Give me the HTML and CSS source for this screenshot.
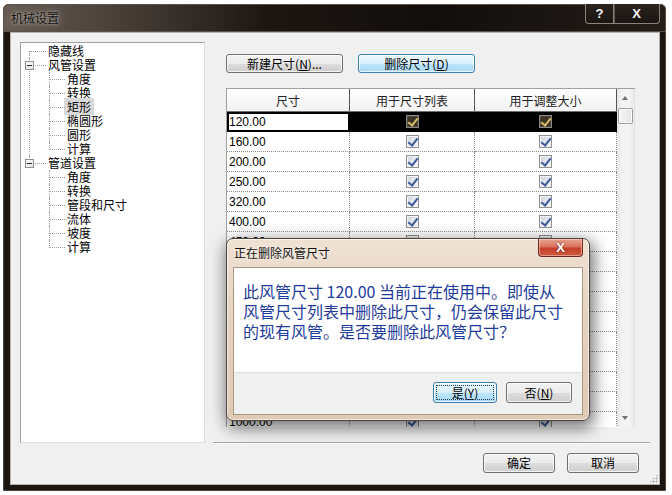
FILE: index.html
```html
<!DOCTYPE html>
<html lang="zh-CN">
<head>
  <meta charset="UTF-8" />
  <title>机械设置</title>
  <link rel="stylesheet" href="styles.css">
</head>
<body>
  <div class="window">
    <div class="titlebar">
      <span class="title">机械设置</span>
      <div class="caption-buttons">
        <span class="cap-btn help">?</span>
        <span class="cap-btn close">X</span>
      </div>
    </div>

    <div class="client">
      <div class="main">
        <ul class="tree">
          <li class="first"><div class="item"><span class="label">隐藏线</span></div></li>
          <li>
            <div class="item"><span class="toggle"></span><span class="label">风管设置</span></div>
            <ul>
              <li><div class="item"><span class="label">角度</span></div></li>
              <li><div class="item"><span class="label">转换</span></div></li>
              <li><div class="item"><span class="label selected">矩形</span></div></li>
              <li><div class="item"><span class="label">椭圆形</span></div></li>
              <li><div class="item"><span class="label">圆形</span></div></li>
              <li class="last"><div class="item"><span class="label">计算</span></div></li>
            </ul>
          </li>
          <li class="last">
            <div class="item"><span class="toggle"></span><span class="label">管道设置</span></div>
            <ul>
              <li><div class="item"><span class="label">角度</span></div></li>
              <li><div class="item"><span class="label">转换</span></div></li>
              <li><div class="item"><span class="label">管段和尺寸</span></div></li>
              <li><div class="item"><span class="label">流体</span></div></li>
              <li><div class="item"><span class="label">坡度</span></div></li>
              <li class="last"><div class="item"><span class="label">计算</span></div></li>
            </ul>
          </li>
        </ul>

        <div class="right">
          <div class="toolbar">
            <button class="btn tool">新建尺寸(<u>N</u>)...</button>
            <button class="btn tool hot">删除尺寸(<u>D</u>)</button>
          </div>

          <div class="grid">
            <div class="grid-main">
              <div class="grid-head">
                <div class="hcell">尺寸</div>
                <div class="hcell">用于尺寸列表</div>
                <div class="hcell">用于调整大小</div>
              </div>
              <div class="grid-body">
                <div class="row selected"><div class="cell size editing">120.00</div><div class="cell"><span class="chk"></span></div><div class="cell"><span class="chk"></span></div></div>
                <div class="row"><div class="cell size">160.00</div><div class="cell"><span class="chk"></span></div><div class="cell"><span class="chk"></span></div></div>
                <div class="row"><div class="cell size">200.00</div><div class="cell"><span class="chk"></span></div><div class="cell"><span class="chk"></span></div></div>
                <div class="row"><div class="cell size">250.00</div><div class="cell"><span class="chk"></span></div><div class="cell"><span class="chk"></span></div></div>
                <div class="row"><div class="cell size">320.00</div><div class="cell"><span class="chk"></span></div><div class="cell"><span class="chk"></span></div></div>
                <div class="row"><div class="cell size">400.00</div><div class="cell"><span class="chk"></span></div><div class="cell"><span class="chk"></span></div></div>
                <div class="row"><div class="cell size">450.00</div><div class="cell"><span class="chk"></span></div><div class="cell"><span class="chk"></span></div></div>
                <div class="row"><div class="cell size">500.00</div><div class="cell"><span class="chk"></span></div><div class="cell"><span class="chk"></span></div></div>
                <div class="row"><div class="cell size">550.00</div><div class="cell"><span class="chk"></span></div><div class="cell"><span class="chk"></span></div></div>
                <div class="row"><div class="cell size">600.00</div><div class="cell"><span class="chk"></span></div><div class="cell"><span class="chk"></span></div></div>
                <div class="row"><div class="cell size">630.00</div><div class="cell"><span class="chk"></span></div><div class="cell"><span class="chk"></span></div></div>
                <div class="row"><div class="cell size">700.00</div><div class="cell"><span class="chk"></span></div><div class="cell"><span class="chk"></span></div></div>
                <div class="row"><div class="cell size">750.00</div><div class="cell"><span class="chk"></span></div><div class="cell"><span class="chk"></span></div></div>
                <div class="row"><div class="cell size">800.00</div><div class="cell"><span class="chk"></span></div><div class="cell"><span class="chk"></span></div></div>
                <div class="row"><div class="cell size">900.00</div><div class="cell"><span class="chk"></span></div><div class="cell"><span class="chk"></span></div></div>
                <div class="row"><div class="cell size">1000.00</div><div class="cell"><span class="chk"></span></div><div class="cell"><span class="chk"></span></div></div>
              </div>
            </div>
            <div class="vscroll">
              <div class="arrow up"></div>
              <div class="thumb"></div>
              <div class="track"></div>
              <div class="arrow down"></div>
            </div>
          </div>

          <div class="separator"></div>
        </div>
      </div>

      <div class="footer">
        <button class="btn wide">确定</button>
        <button class="btn wide">取消</button>
      </div>
      <span class="grip"></span>
    </div>
  </div>

  <div class="msgbox">
    <div class="msg-title">正在删除风管尺寸</div>
    <span class="msg-close">X</span>
    <div class="msg-client">
      <div class="msg-body">
        <div class="msg-line">此风管尺寸 120.00 当前正在使用中。即使从</div>
        <div class="msg-line">风管尺寸列表中删除此尺寸，仍会保留此尺寸</div>
        <div class="msg-line">的现有风管。是否要删除此风管尺寸？</div>
      </div>
      <div class="msg-buttons">
        <button class="btn yes focused">是(<u>Y</u>)</button>
        <button class="btn no">否(<u>N</u>)</button>
      </div>
    </div>
  </div>
</body>
</html>
```

FILE: styles.css
```css
* {
  box-sizing: border-box;
}

body {
  margin: 0;
  width: 672px;
  height: 495px;
  overflow: hidden;
  position: relative;
  background: #ffffff;
  font-family: "Noto Sans CJK SC", "Liberation Sans", sans-serif;
  font-size: 12px;
  color: #000;
}

/* main window */

.window {
  margin: 4px 0 0 3px;
  width: 663px;
  height: 487px;
  display: flex;
  flex-direction: column;
  background: #1b1612;
  border-radius: 6px 6px 2px 2px;
  box-shadow: inset 0 0 0 1px #4a423b;
}

.titlebar {
  height: 28px;
  display: flex;
  align-items: flex-start;
  border-radius: 6px 6px 0 0;
  background: linear-gradient(90deg, #675c55 0%, #4b413a 16%, #1c1612 40%, #120e0b 65%, #231d19 100%);
  box-shadow: inset 0 0 0 1px #5a514a;
}

.title {
  margin: 7px 0 0 8px;
  line-height: 14px;
  color: #111;
  text-shadow: 0 0 3px rgba(215, 206, 198, 0.9), 0 0 8px rgba(170, 160, 150, 0.8);
}

.caption-buttons {
  margin-left: auto;
  margin-right: 6px;
  display: flex;
}

.cap-btn {
  height: 20px;
  display: flex;
  justify-content: center;
  align-items: center;
  border: 1px solid #8a827b;
  border-top: none;
  background: linear-gradient(#2a231f, #1a1512);
  color: #f4f4f4;
  font-family: "Liberation Sans", sans-serif;
  font-weight: bold;
  font-size: 13px;
}

.cap-btn.help {
  width: 29px;
  border-radius: 0 0 0 4px;
}

.cap-btn.close {
  width: 46px;
  border-left: none;
  border-radius: 0 0 4px 0;
  box-shadow: inset 1px 0 0 #5d5650;
}

.client {
  flex: 1;
  margin: 0 6px 6px 7px;
  padding: 9px 9px 0 9px;
  position: relative;
  background: #f0f0f0;
  border: 1px solid #b8b0a9;
}

.main {
  display: flex;
  gap: 8px;
  height: 401px;
}

/* tree */

.tree {
  width: 185px;
  height: 401px;
  margin: 0;
  padding: 1px 0 0 0;
  list-style: none;
  background: #ffffff;
  border: 1px solid;
  border-color: #a0a0a0 #dcdcdc #dcdcdc #a0a0a0;
}

.tree ul {
  margin: 0;
  padding: 0;
  list-style: none;
}

.tree li {
  position: relative;
}

.tree li::before {
  content: '';
  position: absolute;
  left: 8px;
  top: 0;
  bottom: 0;
  border-left: 1px dotted #a0a0a0;
}

.tree li.first::before {
  top: 7px;
}

.tree li.last::before {
  bottom: auto;
  height: 8px;
}

.item {
  position: relative;
  height: 14px;
  line-height: 14px;
  padding-left: 27px;
  white-space: nowrap;
}

.item::before {
  content: '';
  position: absolute;
  left: 9px;
  top: 7px;
  width: 16px;
  border-top: 1px dotted #a0a0a0;
}

.tree ul li::before {
  left: 28px;
}

.tree ul .item {
  padding-left: 46px;
}

.tree ul .item::before {
  left: 29px;
  width: 15px;
}

.toggle {
  position: absolute;
  left: 4px;
  top: 3px;
  width: 9px;
  height: 9px;
  z-index: 1;
  border: 1px solid #929292;
  background: linear-gradient(135deg, #ffffff, #e2e2e2);
}

.toggle::after {
  content: '';
  position: absolute;
  left: 1px;
  top: 3px;
  width: 5px;
  height: 1px;
  background: #2b2b2b;
}

.label.selected {
  background: #d9d9d9;
  padding: 0 3px;
  margin-left: -3px;
}

/* right side */

.right {
  flex: 1;
  display: flex;
  flex-direction: column;
  padding: 12px 0 0 13px;
}

.toolbar {
  display: flex;
  gap: 15px;
}

.btn {
  position: relative;
  height: 19px;
  padding: 0;
  font-family: "Noto Sans CJK SC", "Liberation Sans", sans-serif;
  font-size: 12px;
  line-height: 16px;
  color: #000;
  border: 1px solid #707070;
  border-radius: 3px;
  background: linear-gradient(#f2f2f2 0%, #ebebeb 50%, #dddddd 51%, #cfcfcf 100%);
  box-shadow: inset 0 0 0 1px rgba(255, 255, 255, 0.75);
}

.btn u {
  text-decoration: underline;
}

.btn.tool {
  width: 117px;
}

.btn.hot,
.btn.focused {
  border-color: #3c7fb1;
  background: linear-gradient(#eaf6fd 0%, #d9f0fc 50%, #bee6fd 51%, #a7d9f5 100%);
}

.btn.focused::after {
  content: '';
  position: absolute;
  inset: 2px;
  border: 1px dotted #1c3c5c;
  border-radius: 1px;
}

/* grid */

.grid {
  margin-top: 15px;
  width: 409px;
  height: 339px;
  display: flex;
  border-top: 1px solid #a0a0a0;
  border-left: 1px solid #a0a0a0;
}

.grid-main {
  width: 390px;
}

.grid-head {
  height: 23px;
  display: grid;
  grid-template-columns: 123px 125px 142px;
  background: linear-gradient(#ffffff, #f3f3f3);
  border-bottom: 1px solid #6e6e6e;
}

.hcell {
  display: flex;
  justify-content: center;
  align-items: center;
  color: #222;
  border-right: 1px solid #555;
}

.grid-body {
  height: 315px;
  overflow: hidden;
  background: #ffffff;
}

.row {
  height: 20px;
  display: grid;
  grid-template-columns: 123px 125px 142px;
}

.cell {
  display: flex;
  justify-content: center;
  align-items: center;
  border-right: 1px dotted #8a8a8a;
  border-bottom: 1px dotted #8a8a8a;
}

.cell.size {
  justify-content: flex-start;
  padding-left: 2px;
  font-family: "Liberation Sans", sans-serif;
  font-size: 12px;
}

.row.selected {
  background: #000;
}

.row.selected .cell {
  border-color: #000;
}

.cell.editing {
  background: #ffffff;
  border: 2px solid #000;
  padding-left: 0;
}

.chk {
  position: relative;
  width: 13px;
  height: 13px;
  border: 1px solid #8e8f8f;
  background: linear-gradient(135deg, #cfd4dc, #f7f7f7);
  box-shadow: inset 0 0 0 1px #f4f4f4;
}

.chk::after {
  content: '';
  position: absolute;
  left: 3px;
  top: 0;
  width: 4px;
  height: 8px;
  border: solid #3e5a98;
  border-width: 0 2px 2px 0;
  transform: rotate(38deg);
}

.row.selected .chk {
  border-color: #8a8a8a;
  background: #3b3326;
  box-shadow: inset 0 0 0 1px #4e4535;
}

.row.selected .chk::after {
  border-color: #d9bd6c;
}

.vscroll {
  width: 18px;
  display: flex;
  flex-direction: column;
  background: linear-gradient(90deg, #e6e6e6, #f4f4f4 30%, #f4f4f4 70%, #e9e9e9);
  border-right: 1px solid #e2e2e2;
}

.arrow {
  height: 18px;
  position: relative;
}

.arrow::after {
  content: '';
  position: absolute;
  left: 5px;
  top: 7px;
  border-left: 3px solid transparent;
  border-right: 3px solid transparent;
}

.arrow.up::after {
  border-bottom: 4px solid #707070;
}

.arrow.down::after {
  border-top: 4px solid #707070;
}

.thumb {
  height: 16px;
  margin: 1px 1px 0 1px;
  border: 1px solid #9c9c9c;
  border-radius: 2px;
  background: linear-gradient(90deg, #f6f6f6, #e4e4e4);
  box-shadow: inset 0 0 0 1px #ffffff;
}

.track {
  flex: 1;
}

.separator {
  margin: 15px 0 0 -13px;
  height: 2px;
  border-top: 1px solid #a6a6a6;
  border-bottom: 1px solid #ffffff;
}

/* footer */

.footer {
  display: flex;
  justify-content: flex-end;
  gap: 12px;
  padding: 10px 11px 0 0;
}

.btn.wide {
  width: 72px;
  height: 20px;
}

.grip {
  position: absolute;
  right: 1px;
  bottom: 1px;
  width: 9px;
  height: 9px;
  background: radial-gradient(circle, #a8a8a8 0.8px, transparent 1.2px) 0 0 / 3px 3px;
  clip-path: polygon(100% 0, 100% 100%, 0 100%);
}

/* message box */

.msgbox {
  position: absolute;
  left: 226px;
  top: 238px;
  width: 364px;
  height: 183px;
  display: flex;
  flex-direction: column;
  padding: 0 6px 5px 6px;
  border: 1px solid #4f4439;
  border-radius: 7px;
  background: linear-gradient(180deg, #efe1d3 0%, #e6d3c0 40%, #dfcab5 100%);
  box-shadow: 2px 5px 16px 2px rgba(0, 0, 0, 0.55), inset 0 0 0 1px rgba(255, 255, 255, 0.6);
}

.msg-title {
  height: 28px;
  display: flex;
  align-items: center;
  padding: 0 0 1px 1px;
  color: #111;
  text-shadow: 0 0 6px #ffffff;
}

.msg-close {
  position: absolute;
  top: 0;
  right: 6px;
  width: 45px;
  height: 18px;
  display: flex;
  justify-content: center;
  align-items: center;
  border: 1px solid #6e2a20;
  border-top: none;
  border-radius: 0 0 4px 4px;
  background: linear-gradient(#e9a393 0%, #d9705c 45%, #c4402c 55%, #cf5a3f 100%);
  box-shadow: inset 0 0 0 1px rgba(255, 220, 210, 0.5);
  color: #ffffff;
  font-family: "Liberation Sans", sans-serif;
  font-weight: bold;
  font-size: 13px;
  text-shadow: 0 0 2px #6b1e14;
}

.msg-client {
  flex: 1;
  display: flex;
  flex-direction: column;
  border: 1px solid #a69684;
  background: #f0f0f0;
}

.msg-body {
  height: 105px;
  padding: 13px 0 0 9px;
  background: #ffffff;
  border-bottom: 1px solid #dfdfdf;
  color: #1f3c9a;
  font-size: 16px;
  white-space: nowrap;
}

.msg-line {
  height: 20px;
  line-height: 20px;
}

.msg-buttons {
  display: flex;
  justify-content: flex-end;
  gap: 9px;
  padding: 9px 10px 0 0;
}

.btn.yes {
  width: 64px;
  height: 21px;
}

.btn.no {
  width: 66px;
  height: 21px;
}
```
